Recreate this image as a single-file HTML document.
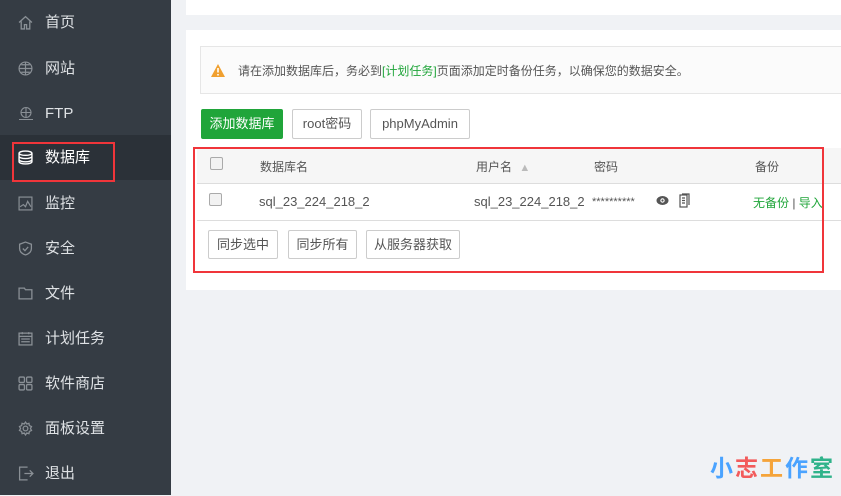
<!DOCTYPE html>
<html><head><meta charset="utf-8"><style>
*{margin:0;padding:0;box-sizing:border-box}
body{width:841px;height:495px;overflow:hidden;background:#f0f2f5;font-family:"Liberation Sans","Noto Sans CJK SC",sans-serif;position:relative}
.side{position:absolute;left:0;top:0;width:171px;height:495px;background:#353c44}
.item{position:absolute;left:0;width:171px;height:45px;color:#dfe2e5;font-size:15px;line-height:45px}
.item .t{position:absolute;left:45px}
.item svg{position:absolute;left:18px;top:15px}
.act{background:#2b3138;color:#fff}
.box{position:absolute;border:2px solid #f0353a}
.top{position:absolute;left:186px;top:0;width:655px;height:15px;background:#fff}
.card{position:absolute;left:186px;top:30px;width:655px;height:260px;background:#fff}
.warn{position:absolute;left:200px;top:46px;width:641px;height:48px;background:#fbfbfb;border:1px solid #e6e6e6;border-right:none;font-size:12px;color:#555;line-height:48px;padding-left:37px}
.btn{position:absolute;height:30px;border:1px solid #ccc;border-radius:2px;background:#fff;font-size:13px;color:#555;line-height:28px;text-align:center}
.th{position:absolute;left:197px;top:148px;width:644px;height:36px;background:#f6f6f6;border-bottom:1px solid #ddd}
.cb{position:absolute;width:13px;height:13px;border:1px solid #aaa;border-radius:2px;background:#f2f2f2}
.tx{position:absolute;font-size:12px;color:#555}
</style></head><body>
<div class="side">
<div class="item" style="top:0"><svg width="15" height="15" viewBox="0 0 14 14" fill="none" stroke="#8a9096" stroke-width="1.2"><path d="M1 7L7 1.5 13 7M3 6v7h3v-4h2v4h3V6"/></svg><span class="t">首页</span></div>
<div class="item" style="top:46px"><svg width="15" height="15" viewBox="0 0 14 14" fill="none" stroke="#8a9096" stroke-width="1.1"><circle cx="7" cy="7" r="6"/><path d="M1 7h12M7 1v12M3 3.5h8M3 10.5h8"/></svg><span class="t">网站</span></div>
<div class="item" style="top:91px"><svg width="16" height="15" viewBox="0 0 16 14" fill="none" stroke="#8a9096" stroke-width="1.1"><circle cx="8" cy="6" r="5"/><path d="M3 6h10M8 1v10M1 13h14"/></svg><span class="t">FTP</span></div>
<div class="item act" style="top:135px"><svg width="15" height="15" viewBox="0 0 14 14" fill="none" stroke="#fff" stroke-width="1.3"><ellipse cx="7" cy="3" rx="6" ry="2"/><path d="M1 3v8c0 1.1 2.7 2 6 2s6-.9 6-2V3M1 6c0 1.1 2.7 2 6 2s6-.9 6-2M1 9c0 1.1 2.7 2 6 2s6-.9 6-2"/></svg><span class="t">数据库</span></div>
<div class="item" style="top:181px"><svg width="15" height="15" viewBox="0 0 14 14" fill="none" stroke="#8a9096" stroke-width="1.1"><rect x="1" y="1" width="12" height="12"/><path d="M2 10l3-2 2 2 2-5 3 5"/></svg><span class="t">监控</span></div>
<div class="item" style="top:226px"><svg width="15" height="15" viewBox="0 0 14 14" fill="none" stroke="#8a9096" stroke-width="1.2"><path d="M7 1l5.5 2v4c0 3-2.5 5-5.5 6-3-1-5.5-3-5.5-6V3z"/><path d="M4.5 7l2 2 3-3.5"/></svg><span class="t">安全</span></div>
<div class="item" style="top:271px"><svg width="16" height="15" viewBox="0 0 15 14" fill="none" stroke="#8a9096" stroke-width="1.2"><path d="M1 2h5l1 1.5h6V12H1z"/></svg><span class="t">文件</span></div>
<div class="item" style="top:316px"><svg width="15" height="15" viewBox="0 0 14 14" fill="none" stroke="#8a9096" stroke-width="1.2"><rect x="1" y="2" width="12" height="11"/><path d="M1 5h12M4 1v2M10 1v2M3 7.5h8M3 10h8"/></svg><span class="t">计划任务</span></div>
<div class="item" style="top:361px"><svg width="15" height="15" viewBox="0 0 14 14" fill="none" stroke="#8a9096" stroke-width="1.2"><rect x="1" y="1" width="5" height="5" rx="1"/><rect x="8" y="1" width="5" height="5" rx="1"/><rect x="1" y="8" width="5" height="5" rx="1"/><rect x="8" y="8" width="5" height="5" rx="1"/></svg><span class="t">软件商店</span></div>
<div class="item" style="top:406px"><svg width="15" height="15" viewBox="0 0 14 14" fill="none" stroke="#8a9096" stroke-width="1.2"><circle cx="7" cy="7" r="2.2"/><path d="M7 1l1.2 1.8 2-.6.4 2.1 2 .9-1 1.8 1 1.8-2 .9-.4 2.1-2-.6L7 13l-1.2-1.8-2 .6-.4-2.1-2-.9 1-1.8-1-1.8 2-.9.4-2.1 2 .6z"/></svg><span class="t">面板设置</span></div>
<div class="item" style="top:451px"><svg width="16" height="15" viewBox="0 0 15 14" fill="none" stroke="#8a9096" stroke-width="1.2"><path d="M9 1H1.5v12H9M6 7h8M11 4l3 3-3 3"/></svg><span class="t">退出</span></div>
</div>
<div class="box" style="left:12px;top:142px;width:103px;height:40px"></div>
<div class="top"></div>
<div class="card"></div>
<div class="warn"><svg style="position:absolute;left:10px;top:17px" width="14" height="13" viewBox="0 0 14 13"><path d="M7 0L14 13H0z" fill="#f0a030"/><path d="M7 4v4.5M7 10v1.5" stroke="#fff" stroke-width="1.6"/></svg>请在添加数据库后，务必到<span style="color:#20a53a">[计划任务]</span>页面添加定时备份任务，以确保您的数据安全。</div>
<div class="btn" style="left:201px;top:109px;width:82px;background:#20a53a;border-color:#20a53a;color:#fff">添加数据库</div>
<div class="btn" style="left:292px;top:109px;width:70px">root密码</div>
<div class="btn" style="left:370px;top:109px;width:100px">phpMyAdmin</div>
<div class="th"></div>
<div style="position:absolute;left:197px;top:220px;width:644px;height:1px;background:#ddd"></div>
<div class="cb" style="left:210px;top:157px"></div>
<div class="cb" style="left:209px;top:193px"></div>
<div class="tx" style="left:260px;top:158px">数据库名</div>
<div class="tx" style="left:476px;top:158px">用户名 <span style="color:#bbb;font-size:11px;margin-left:4px">▲</span></div>
<div class="tx" style="left:594px;top:158px">密码</div>
<div class="tx" style="left:755px;top:158px">备份</div>
<div class="tx" style="left:259px;top:194px;font-size:13px">sql_23_224_218_2</div>
<div class="tx" style="left:474px;top:194px;font-size:13px">sql_23_224_218_2</div>
<div class="tx" style="left:592px;top:196px;font-size:11px">**********</div>
<svg style="position:absolute;left:656px;top:195px" width="13" height="11" viewBox="0 0 13 11"><ellipse cx="6.5" cy="5.5" rx="6" ry="4.5" fill="#555"/><circle cx="6.5" cy="5.5" r="2.2" fill="#fff"/><circle cx="6.5" cy="5.5" r="1.1" fill="#555"/></svg>
<svg style="position:absolute;left:679px;top:193px" width="11" height="15" viewBox="0 0 11 15" fill="none" stroke="#555" stroke-width="1.2"><rect x="1" y="2" width="7" height="12"/><path d="M3 1h7v11M3 5h3M3 7.5h3M3 10h3"/></svg>
<div class="tx" style="left:753px;top:194px;color:#20a53a">无备份 <span style="color:#555">|</span> 导入</div>
<div class="btn" style="left:208px;top:230px;width:70px;height:29px">同步选中</div>
<div class="btn" style="left:288px;top:230px;width:69px;height:29px">同步所有</div>
<div class="btn" style="left:366px;top:230px;width:94px;height:29px">从服务器获取</div>
<div class="box" style="left:193px;top:147px;width:631px;height:126px"></div>
<div style="position:absolute;left:710px;top:452px;font-size:23px;font-weight:bold;letter-spacing:2px;font-family:'Noto Sans CJK SC',sans-serif;line-height:28px"><span style="color:#4aa3ff">小</span><span style="color:#f25b5b">志</span><span style="color:#f5a43a">工</span><span style="color:#4aa3ff">作</span><span style="color:#2fb38a">室</span></div>
</body></html>
